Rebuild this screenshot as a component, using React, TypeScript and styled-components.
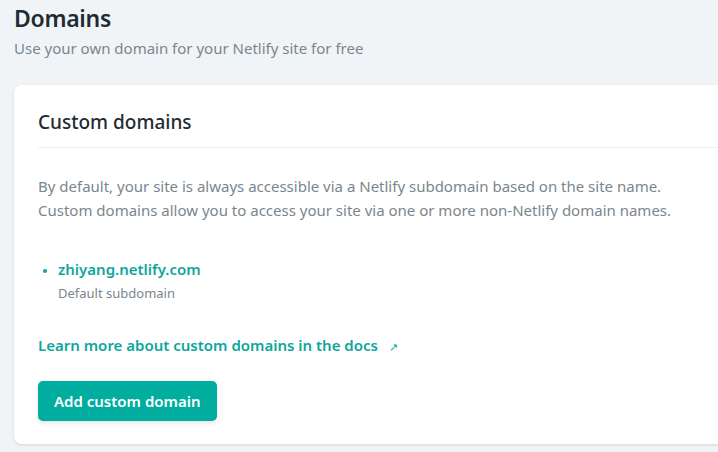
import React from 'react';
import styled, { createGlobalStyle } from 'styled-components';

const GlobalStyle = createGlobalStyle`
  html, body {
    margin: 0;
    padding: 0;
    background: #f1f4f7;
  }
  body {
    font-family: "Noto Sans", "Open Sans", sans-serif;
    color: #1f2b33;
  }
`;

const App: React.FC = () => {
  return (
    <>
      <GlobalStyle />
      <Page>
        <Header>
          <Title>Domains</Title>
          <Subtitle>Use your own domain for your Netlify site for free</Subtitle>
        </Header>
        <Card>
          <CardTitle>Custom domains</CardTitle>
          <CardBody>
            <Intro>
              By default, your site is always accessible via a Netlify subdomain based on the site name.
              <br />
              Custom domains allow you to access your site via one or more non-Netlify domain names.
            </Intro>
            <DomainList>
              <DomainItem>
                <DomainName>zhiyang.netlify.com</DomainName>
                <DomainNote>Default subdomain</DomainNote>
              </DomainItem>
            </DomainList>
            <DocsLink href="#">
              Learn more about custom domains in the docs
              <Arrow>↗</Arrow>
            </DocsLink>
            <Actions>
              <PrimaryButton>Add custom domain</PrimaryButton>
            </Actions>
          </CardBody>
        </Card>
      </Page>
    </>
  );
};

export default App;

const Page = styled.div`
  width: 718px;
  height: 452px;
  overflow: hidden;
  padding: 3px 0 0 14px;
  box-sizing: border-box;
`;

const Header = styled.div`
  margin-bottom: 27px;
`;

const Title = styled.h1`
  margin: 0;
  font-size: 23px;
  line-height: 30px;
  font-weight: 600;
  letter-spacing: -0.3px;
  color: #1f2b33;
`;

const Subtitle = styled.p`
  margin: 5px 0 0;
  font-size: 15px;
  line-height: 20px;
  color: #7a868e;
`;

const Card = styled.section`
  width: 740px;
  background: #fff;
  border-radius: 8px;
  box-shadow: 0 1px 3px rgba(14, 30, 37, 0.12);
  padding: 0 0 23px 24px;
  box-sizing: border-box;
`;

const CardTitle = styled.h2`
  margin: 0;
  padding: 25px 0 13px;
  font-size: 19px;
  line-height: 24px;
  font-weight: 500;
  color: #1f2b33;
  border-bottom: 1px solid #eef1f3;
`;

const CardBody = styled.div`
  padding-top: 26px;
`;

const Intro = styled.p`
  margin: 0;
  font-size: 15px;
  line-height: 24px;
  color: #7a868e;
`;

const DomainList = styled.ul`
  margin: 36px 0 0;
  padding: 0 0 0 20px;
  list-style: disc;
  color: #0fa69b;
`;

const DomainItem = styled.li`
  font-size: 15px;
  line-height: 22px;
  &::marker {
    font-size: 12px;
  }
`;

const DomainName = styled.div`
  font-weight: 600;
  color: #0fa69b;
  font-size: 15px;
`;

const DomainNote = styled.div`
  font-size: 13px;
  line-height: 20px;
  color: #7a868e;
  margin-top: 3px;
`;

const DocsLink = styled.a`
  display: inline-block;
  margin-top: 32px;
  font-size: 15px;
  line-height: 20px;
  font-weight: 600;
  color: #0fa69b;
  text-decoration: none;
`;

const Arrow = styled.span`
  margin-left: 11px;
  font-size: 11px;
  font-weight: 400;
`;

const Actions = styled.div`
  margin-top: 24px;
`;

const PrimaryButton = styled.button`
  height: 40px;
  padding: 0 16px;
  border: none;
  border-radius: 5px;
  background: #00ad9f;
  color: #fff;
  font-family: inherit;
  font-size: 15px;
  font-weight: 600;
  box-shadow: 0 2px 4px rgba(14, 30, 37, 0.12);
  cursor: pointer;
`;
